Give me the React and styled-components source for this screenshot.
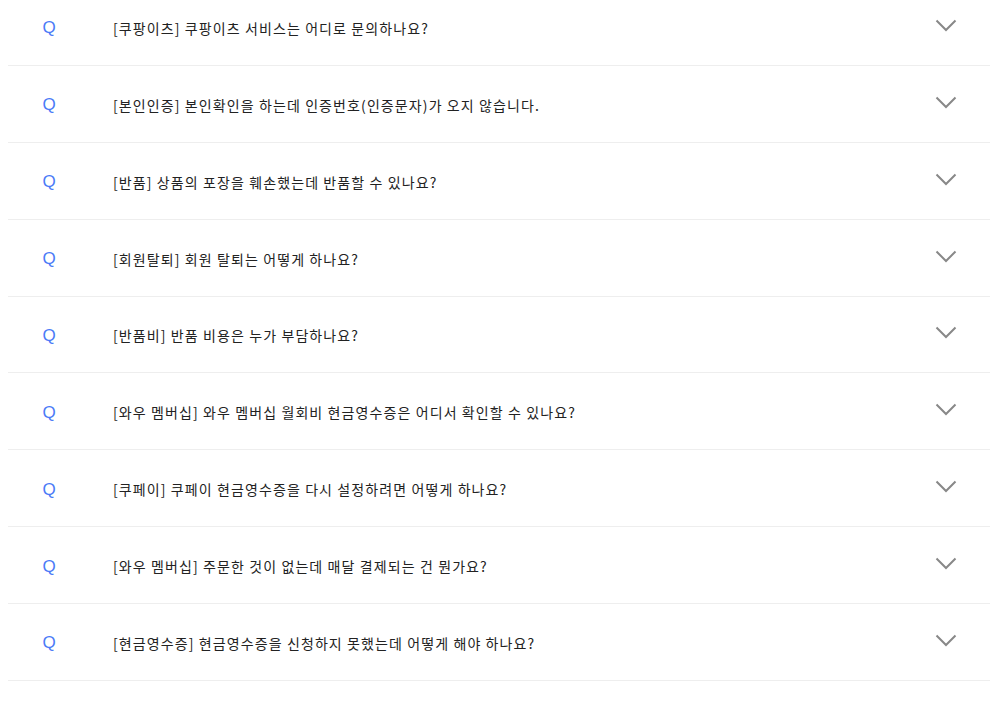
import React from 'react'
import styled, { createGlobalStyle } from 'styled-components'

const GlobalStyle = createGlobalStyle`
  body {
    margin: 0 8px;
    background: #fff;
    font-family: "Noto Sans CJK KR", "Noto Sans", sans-serif;
  }
`

const faqs = [
    '[쿠팡이츠] 쿠팡이츠 서비스는 어디로 문의하나요?',
    '[본인인증] 본인확인을 하는데 인증번호(인증문자)가 오지 않습니다.',
    '[반품] 상품의 포장을 훼손했는데 반품할 수 있나요?',
    '[회원탈퇴] 회원 탈퇴는 어떻게 하나요?',
    '[반품비] 반품 비용은 누가 부담하나요?',
    '[와우 멤버십] 와우 멤버십 월회비 현금영수증은 어디서 확인할 수 있나요?',
    '[쿠페이] 쿠페이 현금영수증을 다시 설정하려면 어떻게 하나요?',
    '[와우 멤버십] 주문한 것이 없는데 매달 결제되는 건 뭔가요?',
    '[현금영수증] 현금영수증을 신청하지 못했는데 어떻게 해야 하나요?',
]

const App = () => {
    return (
        <>
            <GlobalStyle />
            <List>
                {faqs.map((q) => (
                    <Row key={q}>
                        <QMark>Q</QMark>
                        <Question>{q}</Question>
                        <Toggle>
                            <svg width="22" height="13" viewBox="0 0 22 13" fill="none">
                                <polyline points="1.5,1.5 11,11 20.5,1.5" stroke="#888" strokeWidth="2" />
                            </svg>
                        </Toggle>
                    </Row>
                ))}
            </List>
        </>
    )
}

// * Styling
const List = styled.ul`
  list-style: none;
  margin: -11px 0 0;
  padding: 0;
`

const Row = styled.li`
  display: grid;
  grid-template-columns: 82px 1fr 54px;
  align-items: center;
  column-gap: 23px;
  border-bottom: 1px solid #eeeeee;
  padding-top: 2px;
  box-sizing: border-box;
  height: 76.88px;
`

const QMark = styled.span`
  text-align: center;
  font-family: "Liberation Sans", Arial, sans-serif;
  font-size: 17px;
  color: #4a7bf7;
  line-height: 1;
`

const Question = styled.span`
  font-size: 14px;
  color: #222;
  letter-spacing: 1.1px;
`

const Toggle = styled.span`
  display: flex;
  margin-bottom: 5px;
  margin-left: -1px;
`

export default App
